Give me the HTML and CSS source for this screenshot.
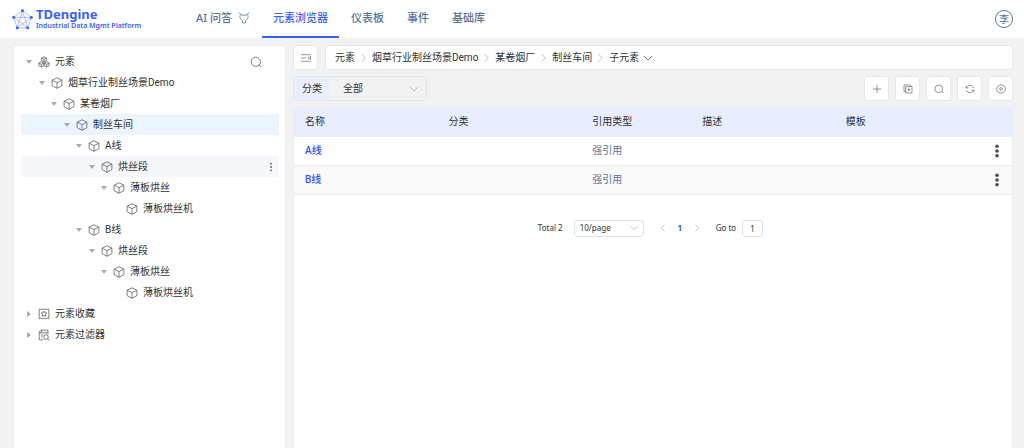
FILE: index.html
```html
<!DOCTYPE html>
<html lang="zh-CN">
<head>
    <meta charset="UTF-8">
    <meta name="viewport" content="width=device-width, initial-scale=1.0">
    <title>TDengine</title>
    <link rel="stylesheet" href="styles.css">
</head>
<body>
    <!-- 图标 -->
    <svg class="sprite" aria-hidden="true">
        <symbol id="cube" viewBox="0 0 12 12"><path d="M6 .8 10.9 3.2V8.6L6 11.3 1.1 8.6V3.2ZM1.1 3.2 6 5.6 10.9 3.2M6 5.6V11.3"/></symbol>
        <symbol id="cubes" viewBox="0 0 12 12"><path d="M6 .8 8.4 2V4.7L6 6 3.6 4.7V2ZM3.6 2 6 3.3 8.4 2M6 3.3V6M3.3 5.8 5.7 7V9.8L3.3 11 .9 9.8V7ZM.9 7 3.3 8.3 5.7 7M3.3 8.3V11M8.7 5.8 11.1 7V9.8L8.7 11 6.3 9.8V7ZM6.3 7 8.7 8.3 11.1 7M8.7 8.3V11"/></symbol>
        <symbol id="favorite" viewBox="0 0 12 12"><path d="M1.2 1.2H10.8V10.8L9.4 10.2 8 10.8 6 10.2 4 10.8 2.6 10.2 1.2 10.8ZM6 3 6.9 4.8 8.8 5 7.4 6.4 7.8 8.3 6 7.4 4.2 8.3 4.6 6.4 3.2 5 5.1 4.8Z"/></symbol>
        <symbol id="filter" viewBox="0 0 12 12"><path d="M10 5V1.2H3L1.2 3V10.8H5.5M1.2 3.8H10M3.4 1.2V3.8M3 6H5M3 8H4.4"/><circle cx="8" cy="8" r="2.3"/><path d="M9.7 9.7 11.4 11.4"/></symbol>
        <symbol id="search" viewBox="0 0 12 12"><circle cx="5.8" cy="5.8" r="4.6"/><path d="M9 9 10.8 10.8"/></symbol>
        <symbol id="right" viewBox="0 0 12 12"><path d="M4 2 8 6 4 10"/></symbol>
        <symbol id="left" viewBox="0 0 12 12"><path d="M8 2 4 6 8 10"/></symbol>
        <symbol id="down" viewBox="0 0 12 12"><path d="M2 4 6 8 10 4"/></symbol>
        <symbol id="more" viewBox="0 0 12 12"><circle cx="6" cy="2" r="1.1"/><circle cx="6" cy="6" r="1.1"/><circle cx="6" cy="10" r="1.1"/></symbol>
        <symbol id="more-large" viewBox="0 0 14 14"><circle cx="7" cy="2.3" r="1.8"/><circle cx="7" cy="7" r="1.8"/><circle cx="7" cy="11.7" r="1.8"/></symbol>
    </svg>

    <header class="header">
        <a class="logo" href="#">
            <svg class="logo-mark" viewBox="0 0 20 20" aria-hidden="true">
                <path d="M10 1.5 1.5 8 5 18H15L18.5 8ZM10 1.5 5 18 18.5 8H1.5L15 18Z"/>
                <circle cx="10" cy="1.7" r="1.4"/><circle cx="1.6" cy="8" r="1.4"/><circle cx="18.4" cy="8" r="1.4"/><circle cx="5" cy="18" r="1.4"/><circle cx="15" cy="18" r="1.4"/>
            </svg>
            <span class="logo-text">
                <span class="logo-name">TDengine</span>
                <span class="logo-sub">Industrial Data Mgmt Platform</span>
            </span>
        </a>
        <nav class="nav">
            <a class="nav-item" href="#">AI 问答
                <svg class="icon nav-icon" viewBox="0 0 12 12" aria-hidden="true"><path d="M3 2.4C1.6 3.6 1.6 5.6 2.6 6.8L4.4 8.6V10.8H7.6V8.6L9.4 6.8C10.4 5.6 10.4 3.6 9 2.4M3 2.4C4.6 3.8 7.4 3.8 9 2.4M3 2.4 1 .8M9 2.4 11 .8"/></svg>
            </a>
            <a class="nav-item active" href="#">元素浏览器</a>
            <a class="nav-item" href="#">仪表板</a>
            <a class="nav-item" href="#">事件</a>
            <a class="nav-item" href="#">基础库</a>
        </nav>
        <button class="avatar">李</button>
    </header>

    <div class="container">
        <aside class="sidebar">
            <ul class="tree">
                <li class="tree-row level-0">
                    <button class="tree-node"><span class="arrow open"></span><svg class="icon"><use href="#cubes"/></svg>元素</button>
                    <button class="row-button tree-search" aria-label="搜索"><svg class="icon"><use href="#search"/></svg></button>
                </li>
                <li class="tree-row level-1"><button class="tree-node"><span class="arrow open"></span><svg class="icon"><use href="#cube"/></svg>烟草行业制丝场景Demo</button></li>
                <li class="tree-row level-2"><button class="tree-node"><span class="arrow open"></span><svg class="icon"><use href="#cube"/></svg>某卷烟厂</button></li>
                <li class="tree-row level-3 selected"><button class="tree-node"><span class="arrow open"></span><svg class="icon"><use href="#cube"/></svg>制丝车间</button></li>
                <li class="tree-row level-4"><button class="tree-node"><span class="arrow open"></span><svg class="icon"><use href="#cube"/></svg>A线</button></li>
                <li class="tree-row level-5 hovered">
                    <button class="tree-node"><span class="arrow open"></span><svg class="icon"><use href="#cube"/></svg>烘丝段</button>
                    <button class="row-button" aria-label="更多"><svg class="icon dots"><use href="#more"/></svg></button>
                </li>
                <li class="tree-row level-6"><button class="tree-node"><span class="arrow open"></span><svg class="icon"><use href="#cube"/></svg>薄板烘丝</button></li>
                <li class="tree-row level-7"><button class="tree-node"><span class="arrow"></span><svg class="icon"><use href="#cube"/></svg>薄板烘丝机</button></li>
                <li class="tree-row level-4"><button class="tree-node"><span class="arrow open"></span><svg class="icon"><use href="#cube"/></svg>B线</button></li>
                <li class="tree-row level-5"><button class="tree-node"><span class="arrow open"></span><svg class="icon"><use href="#cube"/></svg>烘丝段</button></li>
                <li class="tree-row level-6"><button class="tree-node"><span class="arrow open"></span><svg class="icon"><use href="#cube"/></svg>薄板烘丝</button></li>
                <li class="tree-row level-7"><button class="tree-node"><span class="arrow"></span><svg class="icon"><use href="#cube"/></svg>薄板烘丝机</button></li>
                <li class="tree-row level-0"><button class="tree-node"><span class="arrow closed"></span><svg class="icon"><use href="#favorite"/></svg>元素收藏</button></li>
                <li class="tree-row level-0"><button class="tree-node"><span class="arrow closed"></span><svg class="icon"><use href="#filter"/></svg>元素过滤器</button></li>
            </ul>
        </aside>

        <main class="main-content">
            <div class="bar">
                <button class="square-button" aria-label="收起">
                    <svg class="icon" viewBox="0 0 12 12"><path d="M0 2H11.6M0 6H6.5M0 10H11.6M11.4 4V8L8.6 6Z"/></svg>
                </button>
                <nav class="breadcrumb">
                    <a href="#">元素</a>
                    <svg class="icon separator"><use href="#right"/></svg>
                    <a href="#">烟草行业制丝场景Demo</a>
                    <svg class="icon separator"><use href="#right"/></svg>
                    <a href="#">某卷烟厂</a>
                    <svg class="icon separator"><use href="#right"/></svg>
                    <a href="#">制丝车间</a>
                    <svg class="icon separator"><use href="#right"/></svg>
                    <button class="crumb-menu">子元素<svg class="icon"><use href="#down"/></svg></button>
                </nav>
            </div>

            <div class="bar toolbar">
                <div class="category">
                    <label for="category">分类</label>
                    <div class="select-box">
                        <select id="category"><option>全部</option></select>
                        <svg class="icon chevron"><use href="#down"/></svg>
                    </div>
                </div>
                <div class="actions">
                    <button class="square-button" aria-label="新增"><svg class="icon" viewBox="0 0 12 12"><path d="M6 1V11M1 6H11"/></svg></button>
                    <button class="square-button" aria-label="复制"><svg class="icon" viewBox="0 0 12 12"><path d="M3.2 3.2H10.8V10.8H3.2ZM3.2 9H1.2V1.2H9V3.2M7 5V9M5 7H9"/></svg></button>
                    <button class="square-button" aria-label="搜索"><svg class="icon"><use href="#search"/></svg></button>
                    <button class="square-button" aria-label="刷新"><svg class="icon" viewBox="0 0 12 12"><path d="M1.4 2.2V4.8H4M1.4 4.8C2.8 .8 8.8 .4 10.6 5M10.6 9.8V7.2H8M10.6 7.2C9.2 11.2 3.2 11.6 1.4 7"/></svg></button>
                    <button class="square-button" aria-label="设置"><svg class="icon" viewBox="0 0 12 12"><path d="M4 1.2H8L9 2.6 10.4 3.2 11.4 6 10.4 8.8 9 9.4 8 10.8H4L3 9.4 1.6 8.8.6 6 1.6 3.2 3 2.6Z"/><circle cx="6" cy="6" r="1.6"/></svg></button>
                </div>
            </div>

            <div class="panel">
                <table class="table">
                    <colgroup>
                        <col class="col-wide"><col class="col-wide"><col class="col-type"><col class="col-wide"><col><col class="col-action">
                    </colgroup>
                    <thead>
                        <tr><th>名称</th><th>分类</th><th>引用类型</th><th>描述</th><th>模板</th><th></th></tr>
                    </thead>
                    <tbody>
                        <tr>
                            <td><a href="#">A线</a></td><td></td><td>强引用</td><td></td><td></td>
                            <td><button class="row-button" aria-label="更多"><svg class="more-large"><use href="#more-large"/></svg></button></td>
                        </tr>
                        <tr>
                            <td><a href="#">B线</a></td><td></td><td>强引用</td><td></td><td></td>
                            <td><button class="row-button" aria-label="更多"><svg class="more-large"><use href="#more-large"/></svg></button></td>
                        </tr>
                    </tbody>
                </table>

                <div class="pagination">
                    <span>Total 2</span>
                    <div class="select-box page-size">
                        <select aria-label="每页条数"><option>10/page</option></select>
                        <svg class="icon chevron"><use href="#down"/></svg>
                    </div>
                    <div class="pager">
                        <button class="row-button" aria-label="上一页"><svg class="icon separator"><use href="#left"/></svg></button>
                        <button class="row-button current">1</button>
                        <button class="row-button" aria-label="下一页"><svg class="icon separator"><use href="#right"/></svg></button>
                    </div>
                    <div class="jump">
                        <label for="goto">Go to</label>
                        <input id="goto" type="text" value="1">
                    </div>
                </div>
            </div>
        </main>
    </div>
</body>
</html>
```
FILE: styles.css
```css
* {
    box-sizing: border-box;
}
body {
    display: flex;
    flex-direction: column;
    min-height: 100vh;
    margin: 0;
    background: #f2f2f2;
    color: #303133;
    font-family: Roboto, "Noto Sans CJK SC", sans-serif;
    font-size: 10px;
    line-height: 14px;
}
button, select, input {
    margin: 0;
    padding: 0;
    border: none;
    background: none;
    color: inherit;
    font: inherit;
}
button {
    cursor: pointer;
}
a {
    color: inherit;
    text-decoration: none;
}
.sprite {
    display: none;
}
.icon {
    flex: none;
    width: 12px;
    height: 12px;
    fill: none;
    stroke: #606266;
    stroke-width: 0.8;
}

/* 顶部导航 */
.header {
    display: flex;
    height: 38px;
    padding: 0 11px 0 12px;
    background: #fff;
    font-family: "Noto Sans", "Noto Sans CJK SC", sans-serif;
}
.logo {
    display: flex;
    align-items: center;
    gap: 3px;
    width: 173px;
    color: #3a5ff5;
    font-weight: 700;
}
.logo-mark {
    width: 21px;
    height: 21px;
    fill: #3a5ff5;
}
.logo-mark path {
    fill: none;
    stroke: #7f98f5;
    stroke-width: 0.6;
}
.logo-text {
    display: flex;
    flex-direction: column;
    white-space: nowrap;
}
.logo-name {
    font-size: 13px;
    line-height: 13px;
}
.logo-sub {
    font-size: 7px;
    font-weight: 600;
    line-height: 9px;
}
.nav {
    display: flex;
    flex: 1;
    gap: 1px;
}
.nav-item {
    display: flex;
    align-items: center;
    gap: 6px;
    padding: 0 11px;
    border-bottom: 2px solid transparent;
    color: #5b7299;
    font-size: 11px;
    font-weight: 500;
}
.nav-item.active {
    border-color: #3a5ff5;
    color: #3a5ff5;
}
.nav-icon {
    stroke: #5b7299;
}
.avatar {
    align-self: center;
    width: 18px;
    height: 18px;
    border: 1px solid #5b7299;
    border-radius: 50%;
    color: #5b7299;
}

.container {
    display: flex;
    flex: 1;
    gap: 7px;
    padding: 7px 11px 0 13px;
}

/* 元素树 */
.sidebar {
    flex: 0 0 273px;
    padding: 5px 6px 5px 7px;
    border: 1px solid #ededee;
    border-bottom: none;
    border-radius: 3px 3px 0 0;
    background: #fff;
}
.tree {
    margin: 0;
    padding: 0;
    list-style: none;
}
.tree-row {
    display: flex;
    align-items: center;
    height: 21px;
    padding-left: 4px;
}
.tree-row.selected {
    background: #ecf4ff;
}
.tree-row.hovered {
    background: #f5f7fa;
}
.level-1 { padding-left: 17px; }
.level-2 { padding-left: 29px; }
.level-3 { padding-left: 42px; }
.level-4 { padding-left: 54px; }
.level-5 { padding-left: 67px; }
.level-6 { padding-left: 79px; }
.level-7 { padding-left: 92px; }
.tree-node {
    display: flex;
    flex: 1;
    align-items: center;
    gap: 5px;
    white-space: nowrap;
}
.arrow {
    display: flex;
    justify-content: center;
    width: 8px;
}
.arrow.open::before {
    content: "";
    border: 3px solid transparent;
    border-top: 4px solid #a8abb2;
    border-bottom: none;
}
.arrow.closed::before {
    content: "";
    border: 3px solid transparent;
    border-left: 4px solid #a8abb2;
    border-right: none;
}
.row-button {
    display: flex;
    align-items: center;
    justify-content: center;
    min-width: 16px;
}
.tree-search {
    margin-right: 15px;
}
.dots {
    fill: #606266;
    stroke: none;
    width: 10px;
    height: 10px;
}

/* 主区域 */
.main-content {
    display: flex;
    flex: 1;
    flex-direction: column;
    gap: 6px;
    min-width: 0;
}
.bar {
    display: flex;
    gap: 7px;
}
.square-button {
    display: flex;
    align-items: center;
    justify-content: center;
    width: 25px;
    height: 25px;
    border: 1px solid #e6e8ec;
    border-radius: 3px;
    background: #fff;
}
.square-button .icon {
    width: 10px;
    height: 10px;
}
.breadcrumb {
    display: flex;
    flex: 1;
    align-items: center;
    gap: 3px;
    padding: 0 9px;
    border: 1px solid #e6e8ec;
    border-radius: 3px;
    background: #fff;
    white-space: nowrap;
}
.separator {
    width: 11px;
    stroke: #a8abb2;
}
.crumb-menu {
    display: flex;
    align-items: center;
    gap: 3px;
}
.toolbar {
    justify-content: space-between;
}
.category {
    display: flex;
    width: 134px;
    height: 25px;
    border: 1px solid #e4e6ea;
    border-radius: 3px;
    overflow: hidden;
}
.category label {
    display: flex;
    align-items: center;
    padding: 0 8px;
    background: #e8eeff;
}
.select-box {
    display: grid;
    flex: 1;
    align-items: center;
}
.select-box select {
    grid-area: 1 / 1;
    width: 100%;
    height: 100%;
    padding-left: 13px;
    appearance: none;
}
.chevron {
    grid-area: 1 / 1;
    justify-self: end;
    margin-right: 6px;
    stroke: #a8abb2;
    pointer-events: none;
}
.actions {
    display: flex;
    gap: 6px;
}
.panel {
    flex: 1;
    border: 1px solid #ebedf0;
    border-bottom: none;
    background: #fff;
}
.table {
    width: 100%;
    border-collapse: collapse;
    table-layout: fixed;
}
.col-wide {
    width: 20%;
}
.col-type {
    width: 110px;
}
.col-action {
    width: 33px;
}
.table th, .table td {
    height: 29px;
    padding: 0 11px;
    border-bottom: 1px solid #ebeef5;
    text-align: left;
    font-weight: 400;
}
.table th {
    height: 28px;
    background: #e8eeff;
}
.table td {
    color: #5b7299;
}
.table td:last-child {
    padding: 0 7px 0 10px;
}
.table tbody tr:nth-child(even) {
    background: #fafafa;
}
.table a {
    color: #2f54f5;
    font-weight: 500;
}
.more-large {
    width: 14px;
    height: 14px;
    fill: #4a4c50;
}

/* 分页 */
.pagination {
    display: flex;
    align-items: center;
    justify-content: center;
    gap: 11px;
    margin-top: 25px;
    padding-right: 5px;
    font-family: "Noto Sans", sans-serif;
    font-size: 8px;
}
.page-size {
    flex: none;
    width: 70px;
    height: 17px;
    border: 1px solid #e0e2e6;
    border-radius: 3px;
}
.page-size select {
    padding-left: 5px;
}
.page-size .chevron, .pager .icon {
    width: 10px;
    height: 10px;
}
.page-size .chevron {
    margin-right: 4px;
}
.pager {
    display: flex;
    gap: 1px;
}
.current {
    color: #2f54f5;
    font-weight: 700;
}
.jump {
    display: flex;
    align-items: center;
    gap: 6px;
}
.jump input {
    width: 21px;
    height: 17px;
    border: 1px solid #e0e2e6;
    border-radius: 3px;
    text-align: center;
}
```
